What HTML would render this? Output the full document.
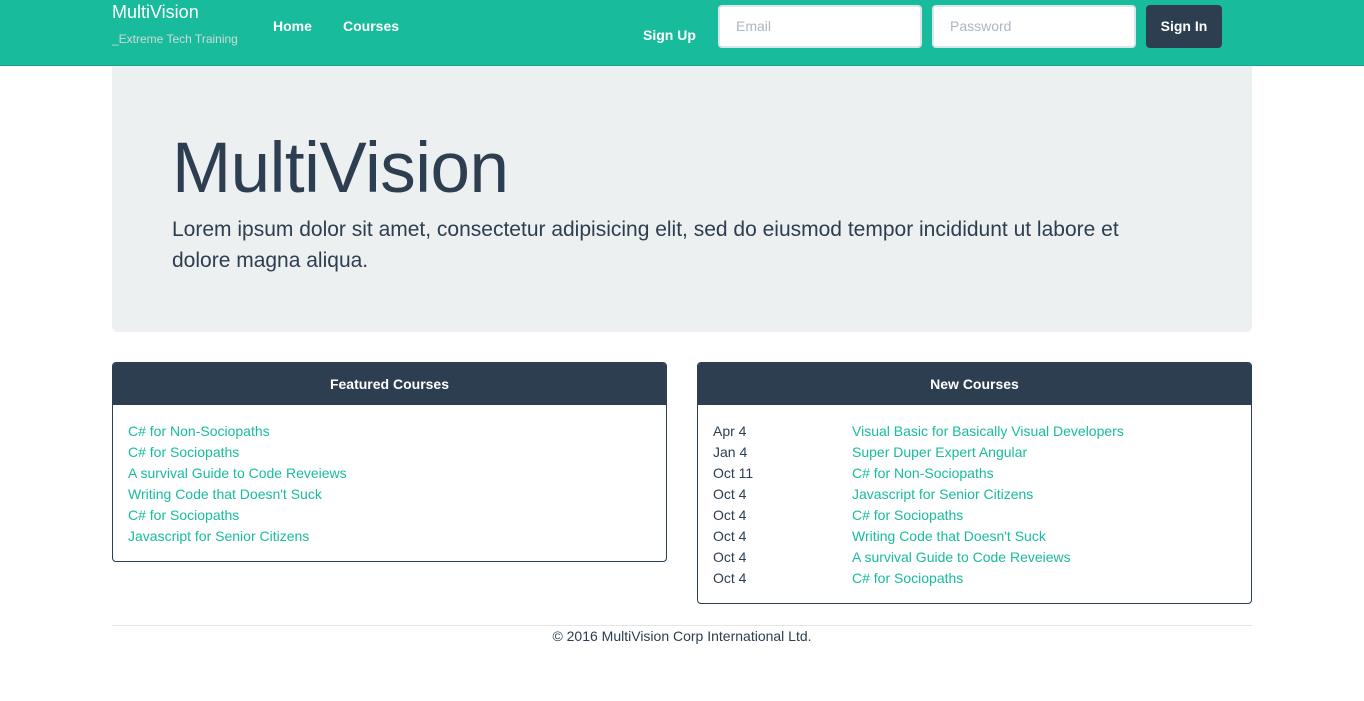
<!DOCTYPE html>
<html><head><meta charset="utf-8"><style>
*{box-sizing:border-box;margin:0;padding:0}
body{width:1364px;height:701px;background:#fff;font-family:"Liberation Sans",sans-serif;color:#2c3e50;position:relative;overflow:hidden}
.nav{position:absolute;left:0;top:0;width:1364px;height:66px;background:#18bc9c;border-bottom:1px solid #15a589}
.a{position:absolute;white-space:nowrap}
.w{color:#fff}
.inp{position:absolute;top:5px;height:43px;background:#fff;border:2px solid #dce4ec;border-radius:4px;color:#acb6c0;font-size:14px;padding:11px 0 0 16px}
.btn{position:absolute;left:1146px;top:5px;width:76px;height:43px;background:#2c3e50;border-radius:4px;color:#fff;font-size:14px;font-weight:bold;text-align:center;line-height:43px}
.hero{position:absolute;left:112px;top:66px;width:1140px;height:266px;background:#ecf0f1;border-radius:0 0 6px 6px}
.panel{position:absolute;border:1px solid #2c3e50;border-radius:4px;overflow:hidden}
.ph{background:#2c3e50;color:#fff;height:42px;line-height:42px;text-align:center;font-size:14px;font-weight:bold}
.l{font-size:14px;line-height:21px;color:#18bc9c}
.d{font-size:14px;line-height:21px;color:#2c3e50}
</style></head><body>
<div class="nav">
<div class="a w" style="left:112px;top:2px;font-size:18px">MultiVision</div>
<div class="a" style="left:112px;top:32px;font-size:12px;color:#cfd8dc">_Extreme Tech Training</div>
<div class="a w" style="left:273px;top:18px;font-size:14px;font-weight:bold">Home</div>
<div class="a w" style="left:343px;top:18px;font-size:14px;font-weight:bold">Courses</div>
<div class="a w" style="left:643px;top:27px;font-size:14px;font-weight:bold">Sign Up</div>
<div class="inp" style="left:718px;width:204px">Email</div>
<div class="inp" style="left:932px;width:204px">Password</div>
<div class="btn">Sign In</div>
</div>
<div class="hero">
<div class="a" style="left:60px;top:62px;font-size:71px;letter-spacing:-0.5px">MultiVision</div>
<div class="a" style="left:60px;top:148px;width:1000px;white-space:normal;font-size:21px;line-height:31px">Lorem ipsum dolor sit amet, consectetur adipisicing elit, sed do eiusmod tempor incididunt ut labore et dolore magna aliqua.</div>
</div>
<div class="panel" style="left:112px;top:362px;width:555px;height:200px">
<div class="ph">Featured Courses</div>
<div style="padding:16px 15px">
<div class="l">C# for Non-Sociopaths</div><div class="l">C# for Sociopaths</div><div class="l">A survival Guide to Code Reveiews</div><div class="l">Writing Code that Doesn't Suck</div><div class="l">C# for Sociopaths</div><div class="l">Javascript for Senior Citizens</div>
</div></div>
<div class="panel" style="left:697px;top:362px;width:555px;height:242px">
<div class="ph">New Courses</div>
<div style="padding:16px 15px;position:relative">
<div style="position:absolute;left:15px;top:16px">
<div class="d">Apr 4</div><div class="d">Jan 4</div><div class="d">Oct 11</div><div class="d">Oct 4</div><div class="d">Oct 4</div><div class="d">Oct 4</div><div class="d">Oct 4</div><div class="d">Oct 4</div></div>
<div style="position:absolute;left:154px;top:16px">
<div class="l">Visual Basic for Basically Visual Developers</div><div class="l">Super Duper Expert Angular</div><div class="l">C# for Non-Sociopaths</div><div class="l">Javascript for Senior Citizens</div><div class="l">C# for Sociopaths</div><div class="l">Writing Code that Doesn't Suck</div><div class="l">A survival Guide to Code Reveiews</div><div class="l">C# for Sociopaths</div></div>
</div></div>
<div class="a" style="left:112px;top:625px;width:1140px;border-top:1px solid #e5e5e5"></div>
<div class="a" style="left:112px;top:628px;width:1140px;text-align:center;font-size:14px">© 2016 MultiVision Corp International Ltd.</div>
</body></html>
